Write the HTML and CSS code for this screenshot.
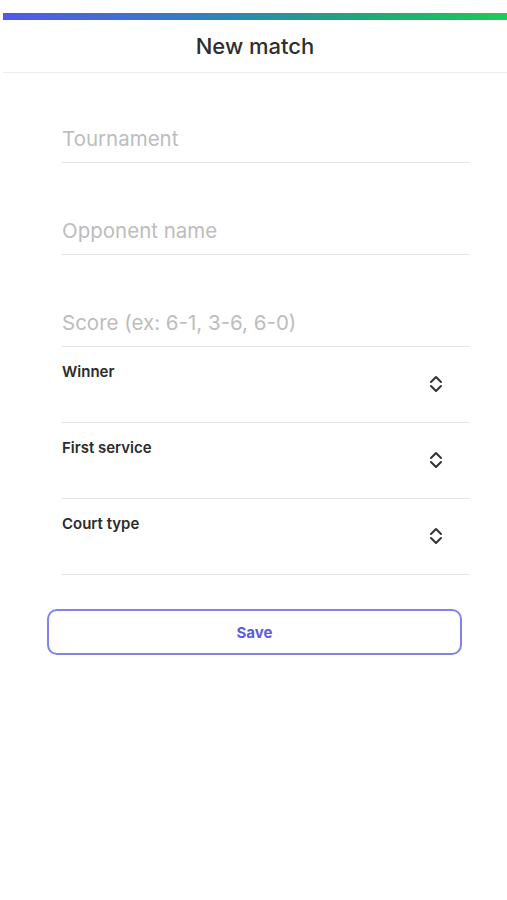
FILE: index.html
```html
<!DOCTYPE html>
<html lang="en">
<head>
<meta charset="utf-8">
<title>New match</title>
<link rel="stylesheet" href="styles.css">
</head>
<body>
<div class="app">
  <div class="topbar"></div>
  <header class="header"><h1 class="title">New match</h1></header>
  <form class="form">
    <div class="field"><input class="input" type="text" placeholder="Tournament"></div>
    <div class="field"><input class="input" type="text" placeholder="Opponent name"></div>
    <div class="field"><input class="input" type="text" placeholder="Score (ex: 6-1, 3-6, 6-0)"></div>
    <div class="select">
      <span class="select-label">Winner</span>
      <svg class="chev" width="14" height="18" viewBox="0 0 14 18"><path d="M2 7 L7 2 L12 7 M2 11 L7 16 L12 11" fill="none" stroke="#333" stroke-width="2" stroke-linecap="round" stroke-linejoin="round"/></svg>
    </div>
    <div class="select">
      <span class="select-label">First service</span>
      <svg class="chev" width="14" height="18" viewBox="0 0 14 18"><path d="M2 7 L7 2 L12 7 M2 11 L7 16 L12 11" fill="none" stroke="#333" stroke-width="2" stroke-linecap="round" stroke-linejoin="round"/></svg>
    </div>
    <div class="select">
      <span class="select-label">Court type</span>
      <svg class="chev" width="14" height="18" viewBox="0 0 14 18"><path d="M2 7 L7 2 L12 7 M2 11 L7 16 L12 11" fill="none" stroke="#333" stroke-width="2" stroke-linecap="round" stroke-linejoin="round"/></svg>
    </div>
  </form>
  <div class="actions"><button class="save" type="button">Save</button></div>
</div>
</body>
</html>
```
FILE: styles.css
```css
* { box-sizing: border-box; }
html, body { margin: 0; padding: 0; background: #fff; }
body { font-family: Inter, "Noto Sans", "Liberation Sans", sans-serif; color: #2b2b2b; }
.app { width: 507px; padding-top: 13px; }
.topbar {
  margin-left: 3px;
  height: 7px;
  background: linear-gradient(90deg, #5457ec 0%, #2f86b4 45%, #22a57a 70%, #1fc95a 100%);
}
.header {
  height: 53px;
  border-bottom: 1px solid #ececec;
  display: flex;
  align-items: center;
  justify-content: center;
  margin-left: 3px;
}
.title { margin: 0 0 0; font-size: 22px; font-weight: 500; color: #2e2e2e; }
.form { padding: 19px 38px 0 62px; display: flex; flex-direction: column; }
.field {
  height: 92px;
  display: flex;
  align-items: flex-end;
  border-bottom: 1px solid #e3e3e3;
}
.field:first-child { height: 71px; }
.input {
  width: 100%;
  border: 0;
  outline: 0;
  padding: 0 0 11px;
  font-family: inherit;
  font-size: 20.5px;
  color: #333;
  background: transparent;
}
.input::placeholder { color: #bdbdbd; }
.select {
  height: 76px;
  border-bottom: 1px solid #e3e3e3;
  display: flex;
  justify-content: space-between;
  align-items: flex-start;
  padding-top: 15px;
}
.select-label { font-size: 15px; font-weight: 600; color: #2b2b2b; }
.chev { margin-top: 13px; margin-right: 26px; }
.actions { padding: 34px 45px 0 47px; }
.save {
  width: 100%;
  height: 46px;
  border: 2px solid #8183ea;
  border-radius: 10px;
  background: #fff;
  color: #5a5ce2;
  font-family: inherit;
  font-size: 15px;
  font-weight: 700;
}
```
